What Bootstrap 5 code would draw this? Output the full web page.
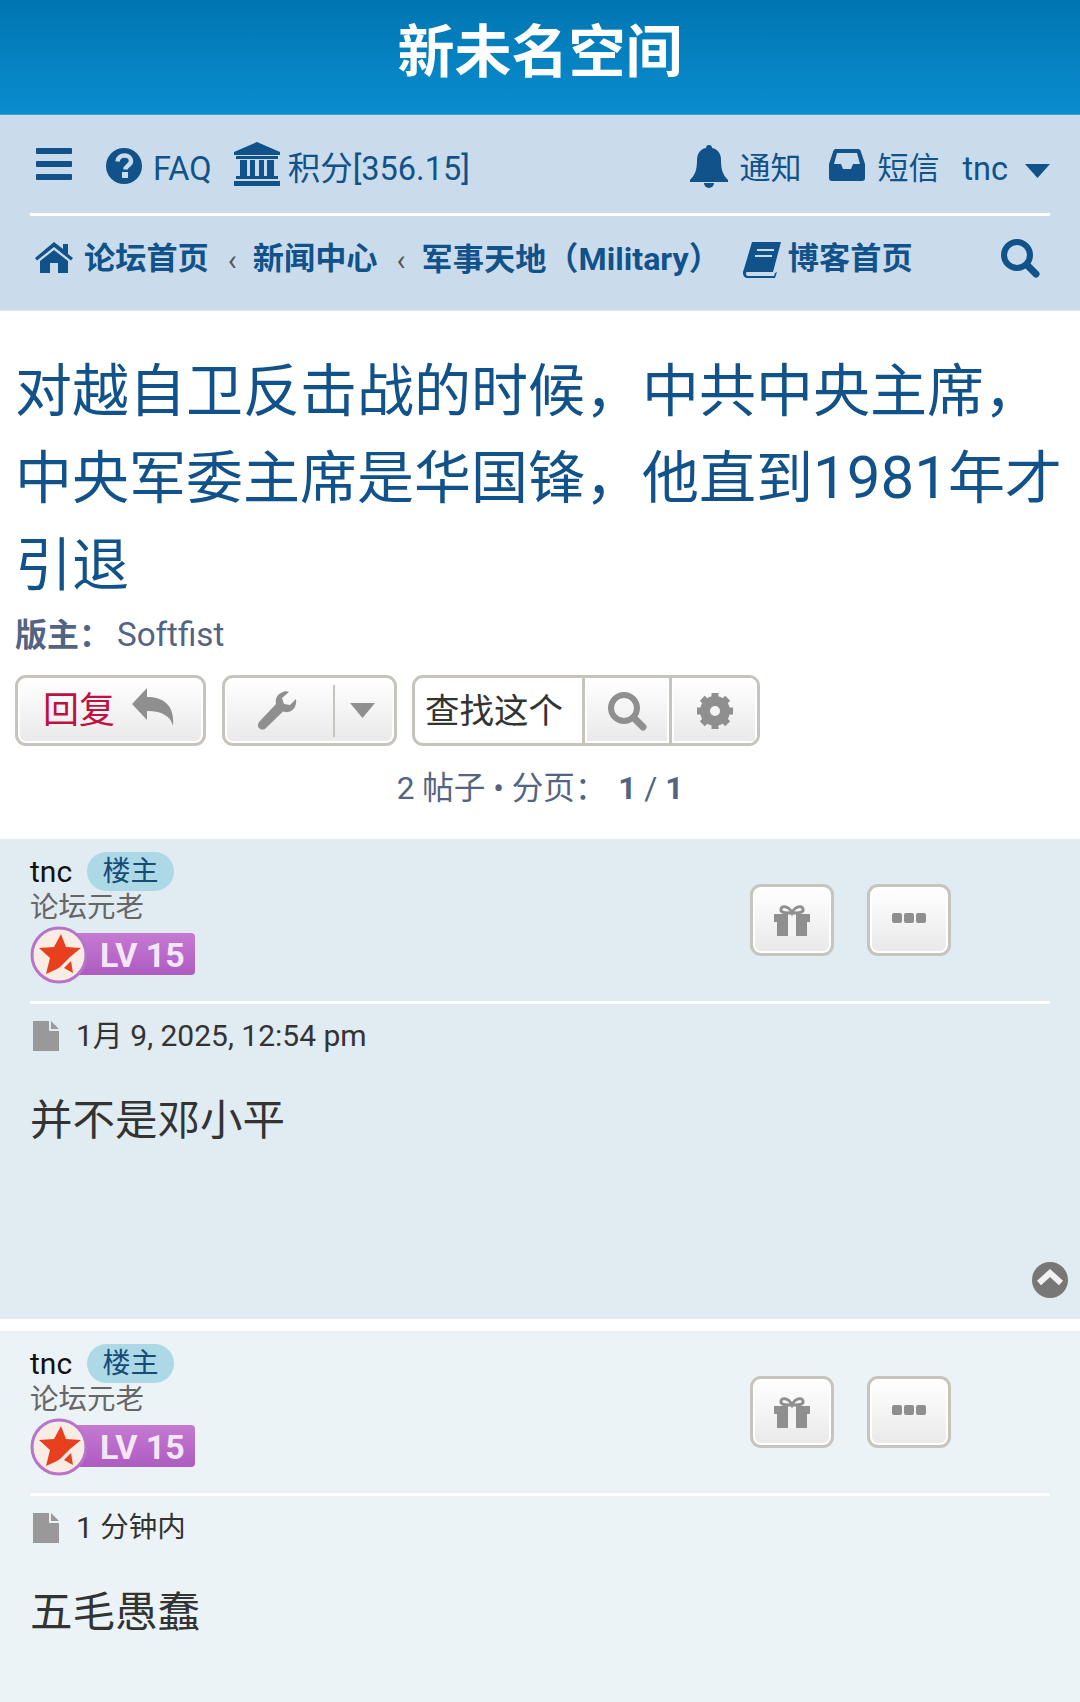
<!DOCTYPE html>
<html lang="zh-CN">
<head>
  <meta charset="UTF-8">
  <title>新未名空间</title>
  <meta name="viewport" content="width=device-width, initial-scale=1">
  <link href="https://cdn.jsdelivr.net/npm/bootstrap@5.3.0/dist/css/bootstrap.min.css" rel="stylesheet">
  <style>
    body { font-family: Roboto, "Noto Sans CJK SC", sans-serif; background: #fff; color: #333; width: 1080px; }
    a { color: inherit; text-decoration: none; }
    .site-head { height: 115px; background: linear-gradient(#0076b1, #0a8ccf); color: #fff; font-size: 57px; font-weight: 700; line-height: 106px; border-bottom: 1px solid #3fa3d8; }
    .site-nav { height: 196px; background: #cadceb; padding: 0 30px; color: #105289; border-bottom: 1px solid #dfe7f0; }
    .nav-top { height: 101px; border-bottom: 3px solid #fff; font-size: 32.5px; padding-top: 6px; }
    .nav-top a { margin-top: 4px; }
    .nav-cjk { font-size: 31px; }
    .nav-bottom { height: 87px; font-size: 31.2px; font-weight: 700; }
    .nav-latin { font-size: 32.2px; }
    .crumb-sep { font-weight: 400; font-size: 30px; color: #555; margin: 0 16px 0 19px; }
    .topic-title { font-size: 57px; line-height: 87px; color: #105289; font-weight: 400; margin: 37px 0 0; padding: 0 15px; }
    .title-num { font-size: 60px; line-height: 1; }
    .mod-line { font-size: 32px; line-height: 48px; color: #536482; padding: 0 15px; margin-top: 2px; }
    .mod-name { font-size: 33.2px; margin-left: -2px; }
    .tool-row { padding: 0 15px; margin-top: 16px; gap: 16px; }
    .grey-btn { height: 71px; border: 3px solid #c7c3bd; border-radius: 11px; background: linear-gradient(#fff, #e9e9e9); box-shadow: inset 0 0 0 2px #fff; padding: 0; color: #8f8f8f; }
    .grey-btn:hover { border-color: #c7c3bd; }
    .reply-btn { width: 191px; color: #c0103f; font-size: 36px; gap: 17px; padding-right: 4px; }
    .tool-btn { width: 175px; }
    .tool-split { width: 2px; height: 52px; background: #c7c3bd; }
    .search-box { width: 348px; height: 71px; border: 3px solid #c7c3bd; border-radius: 11px; overflow: hidden; background: #fff; margin-left: -1px; }
    .search-text { width: 170px; font-size: 34.5px; color: #333; padding-left: 10px; line-height: 66px; border-right: 3px solid #c7c3bd; }
    .search-cell { width: 84px; background: linear-gradient(#fff, #e9e9e9); box-shadow: inset 0 0 0 2px #fff; }
    .search-cell + .search-cell { border-left: 3px solid #c7c3bd; width: 88px; }
    .page-line { font-size: 31.6px; color: #536482; line-height: 48px; margin-top: 19px; }
    .post-one { background: #e1ebf2; height: 480px; margin-top: 26px; }
    .post-two { background: #ecf3f7; height: 374px; margin-top: 12px; }
    .post-box { padding: 13px 30px 0; position: relative; }
    .poster-name { font-size: 30px; line-height: 38px; color: #111; }
    .op-tag { background: #add8e6; color: #164b78; font-size: 28px; line-height: 39px; height: 39px; width: 87px; border-radius: 20px; text-align: center; margin-left: 15px; }
    .poster-rank { font-size: 28.5px; line-height: 34px; color: #666; }
    .small-btn { width: 84px; height: 72px; border-radius: 11px; }
    .post-actions { position: absolute; top: 45px; left: 750px; gap: 33px; }
    .post-rule { border-top: 3px solid #fff; margin-top: 16px; }
    .post-time { font-size: 30px; line-height: 44px; color: #333; margin-top: 10px; }
    .time-cjk { font-size: 28.5px; }
    .post-body { font-size: 42.5px; line-height: 60px; color: #333; margin-top: 33px; }
    .top-link { position: absolute; right: 12px; bottom: 21px; width: 36px; height: 36px; }
  </style>
</head>
<body>
  <header class="site-head text-center">新未名空间</header>

  <nav class="site-nav">
    <div class="nav-top d-flex align-items-center">
      <svg style="margin:0 0 6px 5px" width="38" height="32" viewBox="0 0 38 32" fill="#105289"><rect x="1" y="0" width="36" height="6" rx="1"/><rect x="1" y="13" width="36" height="6" rx="1"/><rect x="1" y="26" width="36" height="6" rx="1"/></svg>
      <svg style="margin:0 0 3px 32px" width="38" height="38" viewBox="0 0 38 38"><circle cx="19" cy="19" r="18" fill="#105289"/><path d="M12.500 14.500c.5-4 3.500-6 7-6 3.800 0 6.500 2.400 6.500 5.500 0 4.500-5.500 4.500-5.500 8.500" fill="none" stroke="#cadceb" stroke-width="4.500"/><rect x="17" y="25" width="6" height="6" fill="#cadceb"/></svg>
      <a href="#" style="margin-left:10px">FAQ</a>
      <svg style="margin:0 0 6px 21px" width="48" height="44" viewBox="0 0 48 44" fill="#105289"><path d="M24 0 47 10v3H1v-3z"/><rect x="3" y="14" width="42" height="3"/><rect x="7" y="18" width="7" height="16"/><rect x="17" y="18" width="5" height="16"/><rect x="26" y="18" width="5" height="16"/><rect x="34" y="18" width="7" height="16"/><rect x="3" y="34" width="42" height="3"/><rect x="1" y="39" width="46" height="5"/></svg>
      <a href="#" style="margin-left:7px">积分[356.15]</a>
      <svg class="ms-auto" width="38" height="44" viewBox="0 0 38 44" fill="#105289"><path d="M19 0c2 0 3 1 3 3 6 1 9 6 9 12 0 10 2 15 7 20v2H0v-2c5-5 7-10 7-20 0-6 3-11 9-12 0-2 1-3 3-3z"/><path d="M14 38a5 5 0 0 0 10 0z"/></svg>
      <a class="nav-cjk" href="#" style="margin-left:11px">通知</a>
      <svg style="margin:0 0 4px 28px" width="36" height="32" viewBox="0 0 36 32"><path fill="#105289" d="M7 0h22c1 0 2 .6 2.500 1.500L36 15v14c0 2-1 3-3 3H3c-2 0-3-1-3-3V15L4.500 1.500C5 .6 6 0 7 0z"/><path fill="#cadceb" d="M8 4h20l3 11h-7l-2 5h-8l-2-5H5z"/></svg>
      <a class="nav-cjk" href="#" style="margin-left:12px">短信</a>
      <a href="#" style="margin-left:23px">tnc</a>
      <svg style="margin:8px 0 0 17px" width="25" height="14" viewBox="0 0 25 14" fill="#105289"><path d="M0 0h25L12.500 14z"/></svg>
    </div>
    <div class="nav-bottom d-flex align-items-center">
      <svg style="margin:0 0 4px 5px" width="38" height="31" viewBox="0 0 38 31" fill="#105289"><path d="M19 0 28 7V2h5v10l5 4-2 2.500L19 5 2 18.500 0 16z"/><path d="M19 8 33 19v12H23V21h-8v10H5V19z"/></svg>
      <a href="#" style="margin-left:11px">论坛首页</a>
      <span class="crumb-sep">‹</span>
      <a href="#">新闻中心</a>
      <span class="crumb-sep">‹</span>
      <a href="#">军事天地<span class="nav-latin">（Military）</span></a>
      <svg style="margin-left:22px" width="38" height="36" viewBox="0 0 38 36"><path fill="#105289" d="M9 0h29l-8 30H4c-1 0-1 1-1 2s1 2 2 2h26l1-3 2-1-2 6H5c-3 0-5-2-5-5 0-1 0-2 1-4z"/><path fill="none" stroke="#cadceb" stroke-width="2" d="M14 8h17M12 14h17"/></svg>
      <a href="#" style="margin-left:7px">博客首页</a>
      <svg class="ms-auto" style="margin:0 10px 4px 0" width="40" height="40" viewBox="0 0 40 40" fill="none" stroke="#105289"><circle cx="17" cy="17" r="13" stroke-width="6"/><path d="M27 27l9 9" stroke-width="7" stroke-linecap="round"/></svg>
    </div>
  </nav>

  <h2 class="topic-title">
    <span class="d-block">对越自卫反击战的时候，中共中央主席，</span>
    <span class="d-block">中央军委主席是华国锋，他直到<span class="title-num">1981</span>年才</span>
    <span class="d-block">引退</span>
  </h2>
  <div class="mod-line"><strong>版主：</strong> <span class="mod-name">Softfist</span></div>

  <div class="tool-row d-flex">
    <a class="btn grey-btn reply-btn d-flex align-items-center justify-content-center" href="#">回复
      <svg style="margin-bottom:8px" width="42" height="38" viewBox="0 0 42 38" fill="#8f8f8f"><path d="M15 0v9c16 0 28 8 26 29-2-9-10-15-26-15v9L0 16z"/></svg>
    </a>
    <div class="btn grey-btn tool-btn d-flex align-items-center">
      <span class="d-flex justify-content-center" style="width:104px">
        <svg width="40" height="40" viewBox="0 0 40 40"><path fill="#8f8f8f" d="M39 8c1 6-2 12-8 13-2 .4-4 0-5-.5L9 37c-2 2-5 2-7 0s-1-5 1-7l16-17c-1-5 1-9 5-11 3-2 6-2 8-1l-7 6 2 6 6 1z"/></svg>
      </span>
      <span class="tool-split" style="margin-left:4px"></span>
      <span class="d-flex justify-content-center flex-grow-1" style="padding-right:4px">
        <svg width="25" height="15" viewBox="0 0 25 15" fill="#8f8f8f"><path d="M0 0h25L12.500 15z"/></svg>
      </span>
    </div>
    <div class="search-box d-flex">
      <div class="search-text">查找这个</div>
      <div class="search-cell d-flex align-items-center justify-content-center">
        <svg width="40" height="40" viewBox="0 0 40 40" fill="none" stroke="#8f8f8f"><circle cx="17" cy="17" r="13" stroke-width="6"/><path d="M27 27l9 9" stroke-width="7" stroke-linecap="round"/></svg>
      </div>
      <div class="search-cell d-flex align-items-center justify-content-center">
        <svg width="38" height="38" viewBox="0 0 38 38"><circle cx="19" cy="19" r="10" fill="none" stroke="#8f8f8f" stroke-width="10"/><path d="M19 1v36M1 19h36M6.300 6.300l25.400 25.400M31.700 6.300 6.300 31.700" stroke="#8f8f8f" stroke-width="7" stroke-dasharray="7 22"/></svg>
      </div>
    </div>
  </div>

  <div class="page-line text-center">2 帖子 • 分页： <strong class="ms-1">1</strong> / <strong>1</strong></div>

  <div class="post-one post-box">
    <div class="d-flex align-items-center"><span class="poster-name">tnc</span><span class="op-tag">楼主</span></div>
    <div class="poster-rank">论坛元老</div>
    <svg class="d-block" width="166" height="60" viewBox="0 0 166 60">
      <defs><linearGradient id="rankA" x1="0" y1="0" x2="0" y2="1"><stop offset="0" stop-color="#c47ad2"/><stop offset="1" stop-color="#ad5cc0"/></linearGradient></defs>
      <rect x="40" y="8" width="125" height="42" rx="4" fill="url(#rankA)"/>
      <circle cx="29" cy="30" r="27" fill="#f8ece4" stroke="#b973c9" stroke-width="3"/>
      <path d="M31 9l5 13 15 1-11 9-3 3-7 7-3 2-11 5 4-16-11-10 15-1z" fill="#e8401f"/>
      <path d="M41 36l2 12-9-5z" fill="#e8401f"/>
      <text x="70" y="42" font-family="Roboto, sans-serif" font-weight="700" font-size="34" fill="#f4e6f7">LV 15</text>
    </svg>
    <div class="post-actions d-flex">
      <a class="btn grey-btn small-btn d-flex align-items-center justify-content-center" href="#"><svg width="36" height="32" viewBox="0 0 36 32" fill="#8f8f8f"><path d="M0 10h36v8h-3v14H3V18H0z"/><rect x="14" y="10" width="8" height="22" fill="#f4f4f4"/><path d="M18 9c-3-7-10-8-11-4s5 4 11 4c6 0 12 0 11-4s-8-3-11 4z" fill="none" stroke="#8f8f8f" stroke-width="3"/></svg></a>
      <a class="btn grey-btn small-btn d-flex align-items-center justify-content-center" href="#"><svg style="margin-bottom:4px" width="34" height="10" viewBox="0 0 34 10" fill="#8f8f8f"><rect width="10" height="10" rx="2"/><rect x="12" width="10" height="10" rx="2"/><rect x="24" width="10" height="10" rx="2"/></svg></a>
    </div>
    <div class="post-rule"></div>
    <div class="post-time d-flex align-items-center">
      <svg style="margin:0 17px 0 3px" width="26" height="30" viewBox="0 0 26 30" fill="#999"><path d="M0 0h16v10h10v20H0z"/><path d="M18 0l8 8h-8z"/></svg>1月 9, 2025, 12:54 pm
    </div>
    <div class="post-body">并不是邓小平</div>
    <a class="top-link" href="#"><svg class="d-block" width="36" height="36" viewBox="0 0 36 36"><circle cx="18" cy="18" r="18" fill="#777"/><path d="M7 21 18 11l11 10" fill="none" stroke="#f2f2f2" stroke-width="6"/></svg></a>
  </div>

  <div class="post-two post-box">
    <div class="d-flex align-items-center"><span class="poster-name">tnc</span><span class="op-tag">楼主</span></div>
    <div class="poster-rank">论坛元老</div>
    <svg class="d-block" width="166" height="60" viewBox="0 0 166 60">
      <rect x="40" y="8" width="125" height="42" rx="4" fill="url(#rankA)"/>
      <circle cx="29" cy="30" r="27" fill="#f8ece4" stroke="#b973c9" stroke-width="3"/>
      <path d="M31 9l5 13 15 1-11 9-3 3-7 7-3 2-11 5 4-16-11-10 15-1z" fill="#e8401f"/>
      <path d="M41 36l2 12-9-5z" fill="#e8401f"/>
      <text x="70" y="42" font-family="Roboto, sans-serif" font-weight="700" font-size="34" fill="#f4e6f7">LV 15</text>
    </svg>
    <div class="post-actions d-flex">
      <a class="btn grey-btn small-btn d-flex align-items-center justify-content-center" href="#"><svg width="36" height="32" viewBox="0 0 36 32" fill="#8f8f8f"><path d="M0 10h36v8h-3v14H3V18H0z"/><rect x="14" y="10" width="8" height="22" fill="#f4f4f4"/><path d="M18 9c-3-7-10-8-11-4s5 4 11 4c6 0 12 0 11-4s-8-3-11 4z" fill="none" stroke="#8f8f8f" stroke-width="3"/></svg></a>
      <a class="btn grey-btn small-btn d-flex align-items-center justify-content-center" href="#"><svg style="margin-bottom:4px" width="34" height="10" viewBox="0 0 34 10" fill="#8f8f8f"><rect width="10" height="10" rx="2"/><rect x="12" width="10" height="10" rx="2"/><rect x="24" width="10" height="10" rx="2"/></svg></a>
    </div>
    <div class="post-rule"></div>
    <div class="post-time d-flex align-items-center">
      <svg style="margin:0 17px 0 3px" width="26" height="30" viewBox="0 0 26 30" fill="#999"><path d="M0 0h16v10h10v20H0z"/><path d="M18 0l8 8h-8z"/></svg>1&nbsp;<span class="time-cjk">分钟内</span>
    </div>
    <div class="post-body">五毛愚蠢</div>
  </div>

  <script src="https://cdn.jsdelivr.net/npm/bootstrap@5.3.0/dist/js/bootstrap.bundle.min.js"></script>
</body>
</html>
